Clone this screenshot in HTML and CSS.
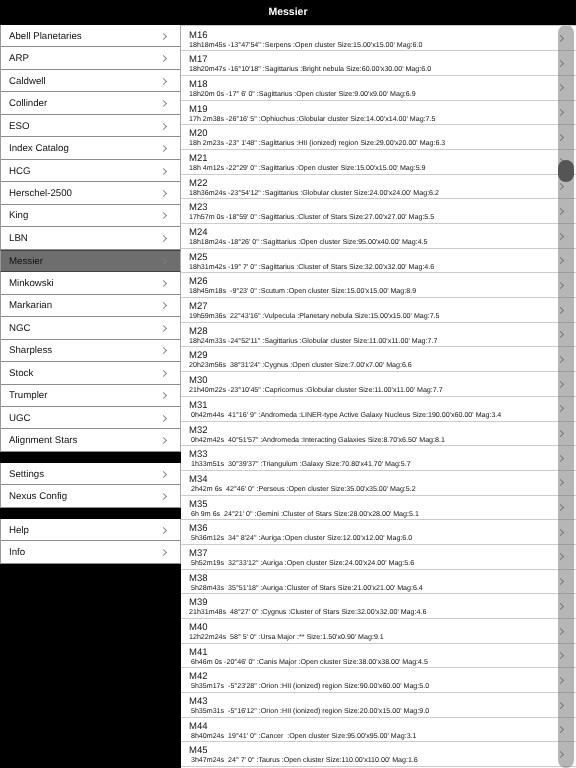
FILE: index.html
```html
<!DOCTYPE html>
<html>
<head>
    <title>Messier</title>
    <link rel="stylesheet" href="styles.css">
</head>
<body>
    <div class="header">Messier</div>
    <div class="main">
        <div class="side">
            <div class="group">
                <div class="item">Abell Planetaries</div>
                <div class="item">ARP</div>
                <div class="item">Caldwell</div>
                <div class="item">Collinder</div>
                <div class="item">ESO</div>
                <div class="item">Index Catalog</div>
                <div class="item">HCG</div>
                <div class="item">Herschel-2500</div>
                <div class="item">King</div>
                <div class="item">LBN</div>
                <div class="item selected">Messier</div>
                <div class="item">Minkowski</div>
                <div class="item">Markarian</div>
                <div class="item">NGC</div>
                <div class="item">Sharpless</div>
                <div class="item">Stock</div>
                <div class="item">Trumpler</div>
                <div class="item">UGC</div>
                <div class="item">Alignment Stars</div>
            </div>
            <div class="group">
                <div class="item">Settings</div>
                <div class="item">Nexus Config</div>
            </div>
            <div class="group">
                <div class="item">Help</div>
                <div class="item">Info</div>
            </div>
        </div>
        <div class="list">
            <div class="row"><p class="name">M16</p><p class="info">18h18m45s -13°47'54" :Serpens :Open cluster Size:15.00'x15.00' Mag:6.0</p></div>
            <div class="row"><p class="name">M17</p><p class="info">18h20m47s -16°10'18" :Sagittarius :Bright nebula Size:60.00'x30.00' Mag:6.0</p></div>
            <div class="row"><p class="name">M18</p><p class="info">18h20m 0s -17° 6' 0" :Sagittarius :Open cluster Size:9.00'x9.00' Mag:6.9</p></div>
            <div class="row"><p class="name">M19</p><p class="info">17h 2m38s -26°16' 5" :Ophiuchus :Globular cluster Size:14.00'x14.00' Mag:7.5</p></div>
            <div class="row"><p class="name">M20</p><p class="info">18h 2m23s -23° 1'48" :Sagittarius :HII (ionized) region Size:29.00'x20.00' Mag:6.3</p></div>
            <div class="row"><p class="name">M21</p><p class="info">18h 4m12s -22°29' 0" :Sagittarius :Open cluster Size:15.00'x15.00' Mag:5.9</p></div>
            <div class="row"><p class="name">M22</p><p class="info">18h36m24s -23°54'12" :Sagittarius :Globular cluster Size:24.00'x24.00' Mag:6.2</p></div>
            <div class="row"><p class="name">M23</p><p class="info">17h57m 0s -18°59' 0" :Sagittarius :Cluster of Stars Size:27.00'x27.00' Mag:5.5</p></div>
            <div class="row"><p class="name">M24</p><p class="info">18h18m24s -18°26' 0" :Sagittarius :Open cluster Size:95.00'x40.00' Mag:4.5</p></div>
            <div class="row"><p class="name">M25</p><p class="info">18h31m42s -19° 7' 0" :Sagittarius :Cluster of Stars Size:32.00'x32.00' Mag:4.6</p></div>
            <div class="row"><p class="name">M26</p><p class="info">18h45m18s  -9°23' 0" :Scutum :Open cluster Size:15.00'x15.00' Mag:8.9</p></div>
            <div class="row"><p class="name">M27</p><p class="info">19h59m36s  22°43'16" :Vulpecula :Planetary nebula Size:15.00'x15.00' Mag:7.5</p></div>
            <div class="row"><p class="name">M28</p><p class="info">18h24m33s -24°52'11" :Sagittarius :Globular cluster Size:11.00'x11.00' Mag:7.7</p></div>
            <div class="row"><p class="name">M29</p><p class="info">20h23m56s  38°31'24" :Cygnus :Open cluster Size:7.00'x7.00' Mag:6.6</p></div>
            <div class="row"><p class="name">M30</p><p class="info">21h40m22s -23°10'45" :Capricornus :Globular cluster Size:11.00'x11.00' Mag:7.7</p></div>
            <div class="row"><p class="name">M31</p><p class="info"> 0h42m44s  41°16' 9" :Andromeda :LINER-type Active Galaxy Nucleus Size:190.00'x60.00' Mag:3.4</p></div>
            <div class="row"><p class="name">M32</p><p class="info"> 0h42m42s  40°51'57" :Andromeda :Interacting Galaxies Size:8.70'x6.50' Mag:8.1</p></div>
            <div class="row"><p class="name">M33</p><p class="info"> 1h33m51s  30°39'37" :Triangulum :Galaxy Size:70.80'x41.70' Mag:5.7</p></div>
            <div class="row"><p class="name">M34</p><p class="info"> 2h42m 6s  42°46' 0" :Perseus :Open cluster Size:35.00'x35.00' Mag:5.2</p></div>
            <div class="row"><p class="name">M35</p><p class="info"> 6h 9m 6s  24°21' 0" :Gemini :Cluster of Stars Size:28.00'x28.00' Mag:5.1</p></div>
            <div class="row"><p class="name">M36</p><p class="info"> 5h36m12s  34° 8'24" :Auriga :Open cluster Size:12.00'x12.00' Mag:6.0</p></div>
            <div class="row"><p class="name">M37</p><p class="info"> 5h52m19s  32°33'12" :Auriga :Open cluster Size:24.00'x24.00' Mag:5.6</p></div>
            <div class="row"><p class="name">M38</p><p class="info"> 5h28m43s  35°51'18" :Auriga :Cluster of Stars Size:21.00'x21.00' Mag:6.4</p></div>
            <div class="row"><p class="name">M39</p><p class="info">21h31m48s  48°27' 0" :Cygnus :Cluster of Stars Size:32.00'x32.00' Mag:4.6</p></div>
            <div class="row"><p class="name">M40</p><p class="info">12h22m24s  58° 5' 0" :Ursa Major :** Size:1.50'x0.90' Mag:9.1</p></div>
            <div class="row"><p class="name">M41</p><p class="info"> 6h46m 0s -20°46' 0" :Canis Major :Open cluster Size:38.00'x38.00' Mag:4.5</p></div>
            <div class="row"><p class="name">M42</p><p class="info"> 5h35m17s  -5°23'28" :Orion :HII (ionized) region Size:90.00'x60.00' Mag:5.0</p></div>
            <div class="row"><p class="name">M43</p><p class="info"> 5h35m31s  -5°16'12" :Orion :HII (ionized) region Size:20.00'x15.00' Mag:9.0</p></div>
            <div class="row"><p class="name">M44</p><p class="info"> 8h40m24s  19°41' 0" :Cancer  :Open cluster Size:95.00'x95.00' Mag:3.1</p></div>
            <div class="row"><p class="name">M45</p><p class="info"> 3h47m24s  24° 7' 0" :Taurus :Open cluster Size:110.00'x110.00' Mag:1.6</p></div>
            <div class="track"><div class="thumb"></div></div>
        </div>
    </div>
</body>
</html>
```

FILE: styles.css
```css
html, body{
    margin: 0;
    padding: 0;
    height: 100%;
    background-color: black;
    overflow: hidden;
    font-family: "Liberation Sans", Arial, Helvetica, sans-serif;
    text-rendering: geometricPrecision;
}
p{
    margin: 0;
}
.header{
    height: 25px;
    line-height: 25px;
    background-color: black;
    color: white;
    font-size: 10.5px;
    font-weight: 700;
    text-align: center;
    filter: blur(0.3px);
}
.main{
    display: flex;
    height: 743px;
    filter: blur(0.3px);
}

/* left menu */
.side{
    width: 181px;
    flex-shrink: 0;
    display: flex;
    flex-direction: column;
    gap: 11px;
}
.group{
    background-color: white;
}
.item{
    height: 22.47px;
    box-sizing: border-box;
    display: flex;
    align-items: center;
    justify-content: space-between;
    padding: 1px 14px 0 8px;
    font-size: 9.7px;
    color: #111;
    background-color: white;
    border-left: 1px solid #999;
    border-right: 1px solid #aaa;
    border-bottom: 1px solid #8c8c8c;
}
.item::after, .row::after{
    content: "";
    width: 4px;
    height: 4px;
    border-top: 1.2px solid #8a8a8a;
    border-right: 1.2px solid #8a8a8a;
    transform: rotate(45deg);
}
.selected{
    background-color: #6e6e6e;
    border-top: 1px solid #444;
    border-bottom: 1px solid #444;
}
.selected::after{
    border-color: #7c7c7c;
}

/* right list */
.list{
    position: relative;
    flex: 1;
    box-sizing: border-box;
    padding-top: 0.5px;
    background-color: white;
    border-top: 1px solid #ccc;
    overflow: hidden;
}
.row{
    height: 24.7px;
    box-sizing: border-box;
    position: relative;
    padding: 3px 0 0 8px;
    border-bottom: 1px solid #ccc;
}
.row::after{
    position: absolute;
    right: 13.5px;
    top: 9.5px;
    border-width: 1.5px 1.5px 0 0;
    border-color: #808080;
}
.name{
    font-size: 9.5px;
    line-height: 11px;
    color: #111;
}
.info{
    font-size: 7.1px;
    line-height: 9px;
    color: #111;
    white-space: pre;
}
.track{
    position: absolute;
    left: 377px;
    top: -1px;
    bottom: 0;
    width: 16px;
    border-radius: 8px;
    background-color: rgba(110, 110, 110, 0.5);
}
.thumb{
    position: absolute;
    top: 135px;
    width: 16px;
    height: 22px;
    border-radius: 8px;
    background-color: #555;
}
```
